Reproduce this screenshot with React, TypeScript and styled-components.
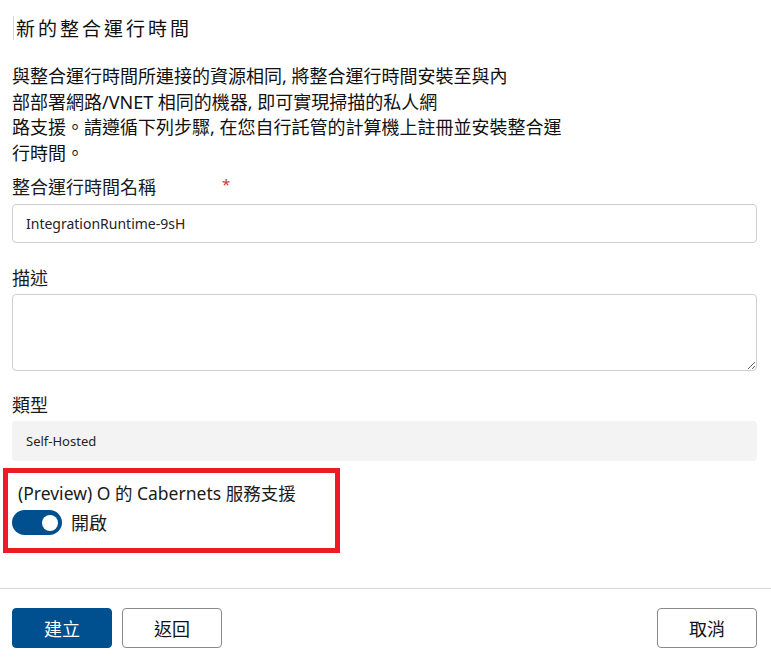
import React from "react";
import styled, { createGlobalStyle } from "styled-components";

const GlobalStyle = createGlobalStyle`
  html, body {
    margin: 0;
    padding: 0;
    background: #ffffff;
  }
  body {
    font-family: "Segoe UI", "Noto Sans", "Noto Sans CJK TC", sans-serif;
    color: #1b1b1b;
  }
  * { box-sizing: border-box; }
`;

const Page = styled.div`
  width: 771px;
  height: 665px;
  padding: 16px 14px 0 12px;
  display: flex;
  flex-direction: column;
  overflow: hidden;
`;

const Title = styled.h1`
  margin: 0 0 0 1px;
  padding-left: 2px;
  border-left: 1px solid #d4d4d4;
  font-size: 19px;
  font-weight: 400;
  line-height: 24px;
  letter-spacing: 3px;
  color: #111;
  font-family: "Noto Sans CJK TC", sans-serif;
`;

const Description = styled.p`
  margin: 24px 0 0 0;
  font-size: 18px;
  line-height: 25.5px;
  color: #111;
`;

const Line = styled.span`
  display: block;
  white-space: nowrap;
`;

const Label = styled.div<{ $gap: number }>`
  margin-top: ${(p) => p.$gap}px;
  font-size: 18px;
  line-height: 24px;
  color: #1b1b1b;
  display: flex;
  align-items: flex-start;
`;

const LabelText = styled.span`
  width: 210px;
`;

const Required = styled.span`
  color: #d13438;
  font-size: 15px;
  line-height: 18px;
`;

const TextInput = styled.input`
  margin-top: 5px;
  width: 745px;
  height: 39px;
  border: 1px solid #cfcfcf;
  border-radius: 4px;
  padding: 0 13px;
  font-family: "Segoe UI", "Noto Sans", sans-serif;
  font-size: 14px;
  color: #242424;
  outline: none;
`;

const TextArea = styled.textarea`
  margin-top: 4px;
  width: 745px;
  height: 77px;
  border: 1px solid #cfcfcf;
  border-radius: 4px;
  padding: 8px 13px;
  font-family: "Segoe UI", "Noto Sans", sans-serif;
  font-size: 14px;
  outline: none;
  resize: vertical;
  display: block;
`;

const ReadOnlyField = styled.div`
  margin-top: 4px;
  width: 745px;
  height: 40px;
  border-radius: 4px;
  background: #f3f3f3;
  padding: 0 14px;
  display: flex;
  align-items: center;
  font-size: 13px;
  color: #242424;
`;

const Highlight = styled.div`
  margin: 7px 0 0 -9px;
  width: 337px;
  height: 85px;
  border: 5px solid #ed1c24;
  padding: 9px 0 0 10px;
  display: flex;
  flex-direction: column;
`;

const FeatureTitle = styled.div`
  font-size: 17.5px;
  line-height: 22px;
  color: #1b1b1b;
`;

const ToggleRow = styled.div`
  margin-top: 6px;
  margin-left: -6px;
  display: flex;
  align-items: center;
  gap: 9px;
`;

const Switch = styled.div<{ $on: boolean }>`
  width: 50px;
  height: 25px;
  border-radius: 13px;
  background: ${(p) => (p.$on ? "#00508f" : "#ffffff")};
  display: flex;
  align-items: center;
  justify-content: ${(p) => (p.$on ? "flex-end" : "flex-start")};
  padding: 0 4px;
`;

const Knob = styled.div`
  width: 16px;
  height: 16px;
  border-radius: 50%;
  background: #ffffff;
`;

const ToggleLabel = styled.span`
  font-size: 18px;
  line-height: 24px;
  color: #1b1b1b;
`;

const Divider = styled.hr`
  margin: 35px -14px 0 -12px;
  border: none;
  border-top: 1px solid #d6d6d6;
  height: 0;
`;

const Footer = styled.div`
  margin-top: 19px;
  display: flex;
  gap: 10px;
`;

const Button = styled.button<{ $primary?: boolean }>`
  width: 100px;
  height: 40px;
  border-radius: 4px;
  font-family: "Noto Sans CJK TC", sans-serif;
  font-size: 18px;
  cursor: pointer;
  border: 1px solid ${(p) => (p.$primary ? "#00508f" : "#8a8a8a")};
  background: ${(p) => (p.$primary ? "#00508f" : "#ffffff")};
  color: ${(p) => (p.$primary ? "#ffffff" : "#111111")};
`;

const Spacer = styled.div`
  flex: 1;
`;

export default function App() {
  return (
    <>
      <GlobalStyle />
      <Page>
        <Title>新的整合運行時間</Title>
        <Description>
          <Line>與整合運行時間所連接的資源相同, 將整合運行時間安裝至與內</Line>
          <Line>部部署網路/VNET 相同的機器, 即可實現掃描的私人網</Line>
          <Line>路支援。請遵循下列步驟, 在您自行託管的計算機上註冊並安裝整合運</Line>
          <Line>行時間。</Line>
        </Description>

        <Label $gap={9}>
          <LabelText>整合運行時間名稱</LabelText>
          <Required>*</Required>
        </Label>
        <TextInput defaultValue="IntegrationRuntime-9sH" />

        <Label $gap={23}>
          <LabelText>描述</LabelText>
        </Label>
        <TextArea />

        <Label $gap={22}>
          <LabelText>類型</LabelText>
        </Label>
        <ReadOnlyField>Self-Hosted</ReadOnlyField>

        <Highlight>
          <FeatureTitle>(Preview) O 的 Cabernets 服務支援</FeatureTitle>
          <ToggleRow>
            <Switch $on>
              <Knob />
            </Switch>
            <ToggleLabel>開啟</ToggleLabel>
          </ToggleRow>
        </Highlight>

        <Divider />

        <Footer>
          <Button $primary>建立</Button>
          <Button>返回</Button>
          <Spacer />
          <Button>取消</Button>
        </Footer>
      </Page>
    </>
  );
}
